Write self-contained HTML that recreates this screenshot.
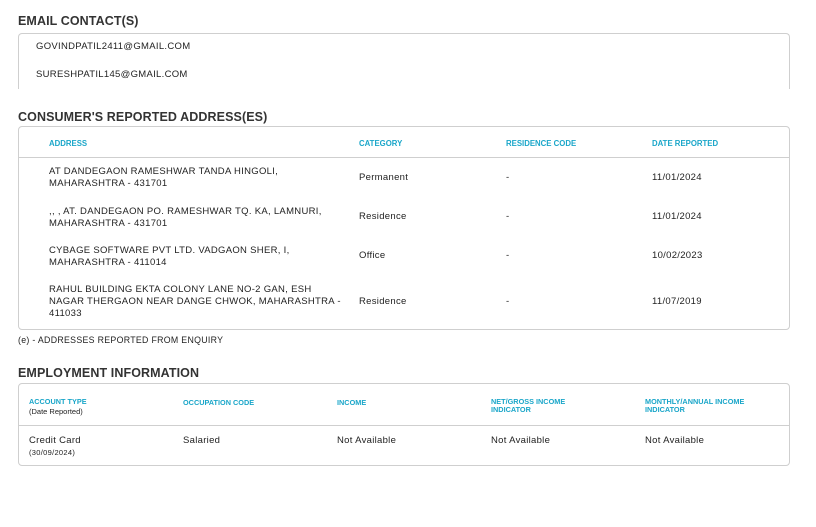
<!DOCTYPE html>
<html><head><style>
*{margin:0;padding:0;box-sizing:border-box}
body{width:816px;height:527px;background:#fff;font-family:"Liberation Sans",sans-serif;color:#222;position:relative;overflow:hidden}
.a{position:absolute;white-space:nowrap}
h2{position:absolute;font-size:12.5px;font-weight:bold;color:#333;letter-spacing:.1px}
.box{position:absolute;border:1px solid #cfcfcf;border-radius:4px}
.hd{position:absolute;color:#1aa6c9;font-size:7.8px;font-weight:bold}
.t{position:absolute;font-size:9.5px;line-height:12px;color:#222;letter-spacing:.3px;white-space:nowrap}
.ln{position:absolute;height:1px;background:#cfcfcf}
</style></head><body>
<h2 style="left:18px;top:14px">EMAIL CONTACT(S)</h2>
<div class="box" style="left:18px;top:33px;width:772px;height:56px;border-bottom:none;border-radius:4px 4px 0 0"></div>
<div class="a t" style="left:36px;top:41px">GOVINDPATIL2411@GMAIL.COM</div>
<div class="a t" style="left:36px;top:69px">SURESHPATIL145@GMAIL.COM</div>

<h2 style="left:18px;top:110px">CONSUMER'S REPORTED ADDRESS(ES)</h2>
<div class="box" style="left:18px;top:126px;width:772px;height:204px"></div>
<div class="ln" style="left:19px;top:157px;width:770px"></div>
<div class="hd" style="left:49px;top:139px">ADDRESS</div>
<div class="hd" style="left:359px;top:139px">CATEGORY</div>
<div class="hd" style="left:506px;top:139px">RESIDENCE CODE</div>
<div class="hd" style="left:652px;top:139px">DATE REPORTED</div>

<div class="t" style="left:49px;top:166px">AT DANDEGAON RAMESHWAR TANDA HINGOLI,<br>MAHARASHTRA - 431701</div>
<div class="t" style="left:359px;top:172px">Permanent</div><div class="t" style="left:506px;top:172px">-</div><div class="t" style="left:652px;top:172px">11/01/2024</div>

<div class="t" style="left:49px;top:206px">,, , AT. DANDEGAON PO. RAMESHWAR TQ. KA, LAMNURI,<br>MAHARASHTRA - 431701</div>
<div class="t" style="left:359px;top:211px">Residence</div><div class="t" style="left:506px;top:211px">-</div><div class="t" style="left:652px;top:211px">11/01/2024</div>

<div class="t" style="left:49px;top:245px">CYBAGE SOFTWARE PVT LTD. VADGAON SHER, I,<br>MAHARASHTRA - 411014</div>
<div class="t" style="left:359px;top:250px">Office</div><div class="t" style="left:506px;top:250px">-</div><div class="t" style="left:652px;top:250px">10/02/2023</div>

<div class="t" style="left:49px;top:284px">RAHUL BUILDING EKTA COLONY LANE NO-2 GAN, ESH<br>NAGAR THERGAON NEAR DANGE CHWOK, MAHARASHTRA -<br>411033</div>
<div class="t" style="left:359px;top:296px">Residence</div><div class="t" style="left:506px;top:296px">-</div><div class="t" style="left:652px;top:296px">11/07/2019</div>

<div class="t" style="left:18px;top:334px;font-size:8.8px">(e) - ADDRESSES REPORTED FROM ENQUIRY</div>

<h2 style="left:18px;top:366px">EMPLOYMENT INFORMATION</h2>
<div class="box" style="left:18px;top:383px;width:772px;height:83px"></div>
<div class="ln" style="left:19px;top:425px;width:770px"></div>
<div class="hd" style="left:29px;top:398px;font-size:7.3px;line-height:7.5px">ACCOUNT TYPE<br><span style="color:#222;font-weight:normal;font-size:7.5px;line-height:12px">(Date Reported)</span></div>
<div class="hd" style="left:183px;top:398px;font-size:7.3px">OCCUPATION CODE</div>
<div class="hd" style="left:337px;top:398px;font-size:7.3px">INCOME</div>
<div class="hd" style="left:491px;top:398px;font-size:7.3px;line-height:7.5px">NET/GROSS INCOME<br>INDICATOR</div>
<div class="hd" style="left:645px;top:398px;font-size:7.3px;line-height:7.5px">MONTHLY/ANNUAL INCOME<br>INDICATOR</div>
<div class="t" style="left:29px;top:435px">Credit Card</div>
<div class="t" style="left:29px;top:447px;font-size:7.5px">(30/09/2024)</div>
<div class="t" style="left:183px;top:435px">Salaried</div>
<div class="t" style="left:337px;top:435px">Not Available</div>
<div class="t" style="left:491px;top:435px">Not Available</div>
<div class="t" style="left:645px;top:435px">Not Available</div>
</body></html>
